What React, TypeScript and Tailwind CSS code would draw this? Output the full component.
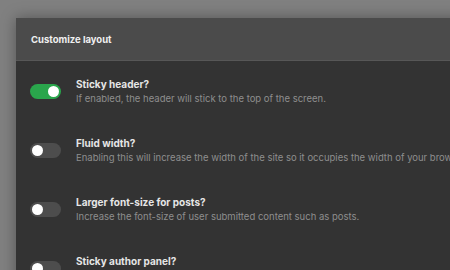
const settings = [
  {
    title: "Sticky header?",
    description: "If enabled, the header will stick to the top of the screen.",
    enabled: true,
  },
  {
    title: "Fluid width?",
    description:
      "Enabling this will increase the width of the site so it occupies the width of your browser window.",
    enabled: false,
  },
  {
    title: "Larger font-size for posts?",
    description: "Increase the font-size of user submitted content such as posts.",
    enabled: false,
  },
  {
    title: "Sticky author panel?",
    description: "Keep the author panel in view while scrolling through long posts.",
    enabled: false,
  },
];

function Toggle({ on }: { on: boolean }) {
  return (
    <div
      className={`flex h-[15px] w-[31px] shrink-0 items-center rounded-full px-[2px] ${
        on ? "justify-end bg-[#2aa64c]" : "justify-start bg-[#4d4d4d]"
      }`}
    >
      <div className="h-[11px] w-[11px] rounded-full bg-white" />
    </div>
  );
}

export default function App() {
  return (
    <div
      className="h-[270px] w-[450px] overflow-hidden bg-[#808080] pl-[16px] pt-[18px]"
      style={{ fontFamily: "Inter, 'Liberation Sans', sans-serif" }}
    >
      <div className="w-[520px] bg-[#333333] shadow-[0_0_14px_rgba(0,0,0,0.35)]">
        <div className="flex h-[43px] items-center border-b border-[#575757] bg-[#4b4b4b] px-[15px] pt-[2px] text-[9.5px] font-bold text-[#f0f0f0]">
          Customize layout
        </div>
        <div className="flex flex-col gap-[30px] px-[14px] pb-6 pt-[16px]">
          {settings.map((item) => (
            <div key={item.title} className="flex items-center gap-[15px]">
              <Toggle on={item.enabled} />
              <div className="min-w-0 whitespace-nowrap">
                <p className="text-[10px] font-bold leading-[14px] text-[#e6e6e6]">{item.title}</p>
                <p className="mt-[1px] text-[9.5px] leading-[14px] text-[#8e8e8e]">{item.description}</p>
              </div>
            </div>
          ))}
        </div>
      </div>
    </div>
  );
}
